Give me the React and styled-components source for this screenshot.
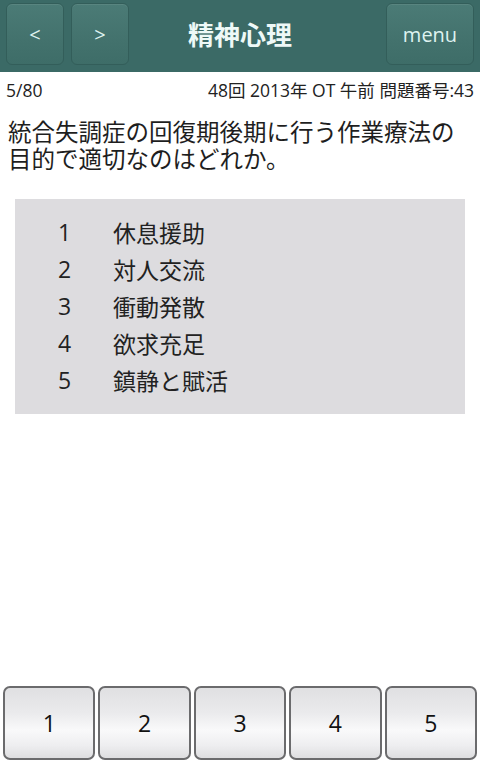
import React from "react";
import styled, { createGlobalStyle } from "styled-components";

const GlobalStyle = createGlobalStyle`
  html, body {
    margin: 0;
    padding: 0;
    background: #fff;
  }
  body {
    font-family: "Open Sans", "Noto Sans CJK JP", sans-serif;
    color: #1a1a1a;
  }
`;

const Page = styled.div`
  width: 480px;
  height: 760px;
  display: flex;
  flex-direction: column;
  background: #fff;
  overflow: hidden;
`;

const Header = styled.header`
  height: 72px;
  background: #3b6a66;
  display: grid;
  grid-template-columns: 1fr auto 1fr;
  align-items: center;
  padding: 0 6px;
  box-sizing: border-box;
`;

const NavGroup = styled.div`
  display: flex;
  gap: 7px;
  justify-content: ${(p) => (p.$end ? "flex-end" : "flex-start")};
`;

const NavButton = styled.button`
  width: ${(p) => p.$w}px;
  height: 62px;
  margin-top: -4px;
  border-radius: 6px;
  border: 1px solid #335e5a;
  background: linear-gradient(180deg, #4b7b76 0%, #43726d 60%, #3e6d68 100%);
  box-shadow: inset 0 1px 0 rgba(255, 255, 255, 0.08);
  color: #dff3f0;
  font-family: "Open Sans", sans-serif;
  font-size: ${(p) => p.$fs}px;
  padding: 0;
  display: flex;
  align-items: center;
  justify-content: center;
`;

const Title = styled.h1`
  margin: -4px 0 0;
  text-align: center;
  color: #eef9f7;
  font-family: "Open Sans", "Noto Sans CJK JP", sans-serif;
  font-size: 26px;
  font-weight: 700;
`;

const InfoRow = styled.div`
  display: flex;
  justify-content: space-between;
  padding: 8px 6px 0 6px;
  font-size: 17.5px;
  color: #222;
  line-height: 20px;
`;

const Question = styled.p`
  margin: 19px 0 0;
  padding: 0 8px;
  font-size: 23.5px;
  line-height: 27px;
  color: #1e1e1e;
`;

const Choices = styled.ol`
  list-style: none;
  margin: 26px 15px 0;
  padding: 14px 0 16px;
  background: #dddcdf;
  display: flex;
  flex-direction: column;
`;

const Choice = styled.li`
  display: flex;
  align-items: center;
  height: 37px;
  font-size: 23px;
  color: #222;
`;

const ChoiceNum = styled.span`
  width: 98px;
  padding-left: 43px;
  box-sizing: border-box;
`;

const Spacer = styled.div`
  flex: 1;
`;

const AnswerBar = styled.div`
  display: flex;
  gap: 3px;
  padding: 0 3px;
  height: 74px;
`;

const AnswerButton = styled.button`
  flex: 1;
  height: 74px;
  border: 2px solid #6b6b6d;
  border-radius: 7px;
  background: linear-gradient(
    180deg,
    #e0e0e2 0%,
    #eaeaec 35%,
    #f9f9fa 60%,
    #eeeef0 82%,
    #dedee0 100%
  );
  font-family: "Open Sans", sans-serif;
  font-size: 23px;
  color: #111;
  padding: 0;
`;

const choices = ["休息援助", "対人交流", "衝動発散", "欲求充足", "鎮静と賦活"];

export default function App() {
  return (
    <Page>
      <GlobalStyle />
      <Header>
        <NavGroup>
          <NavButton $w={58} $fs={20}>&lt;</NavButton>
          <NavButton $w={58} $fs={20}>&gt;</NavButton>
        </NavGroup>
        <Title>精神心理</Title>
        <NavGroup $end>
          <NavButton $w={88} $fs={20}>menu</NavButton>
        </NavGroup>
      </Header>
      <InfoRow>
        <span>5/80</span>
        <span>48回 2013年 OT 午前 問題番号:43</span>
      </InfoRow>
      <Question>
        統合失調症の回復期後期に行う作業療法の目的で適切なのはどれか。
      </Question>
      <Choices>
        {choices.map((c, i) => (
          <Choice key={c}>
            <ChoiceNum>{i + 1}</ChoiceNum>
            <span>{c}</span>
          </Choice>
        ))}
      </Choices>
      <Spacer />
      <AnswerBar>
        {[1, 2, 3, 4, 5].map((n) => (
          <AnswerButton key={n}>{n}</AnswerButton>
        ))}
      </AnswerBar>
    </Page>
  );
}
